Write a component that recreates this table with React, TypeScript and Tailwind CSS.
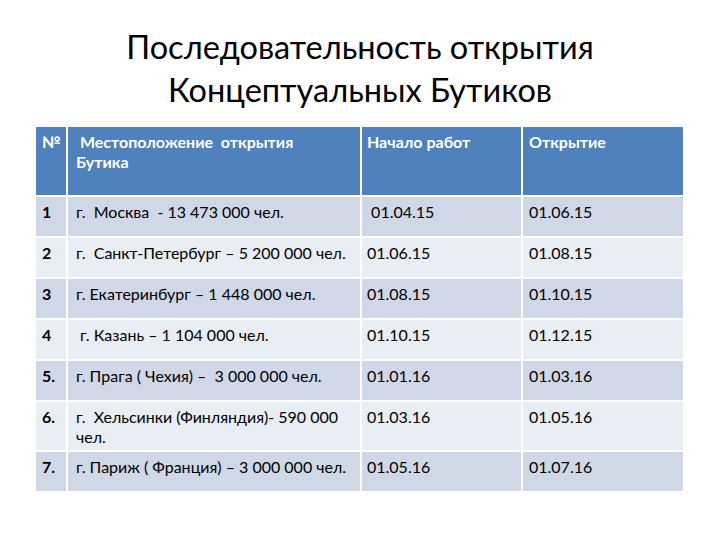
import React from "react";

const rows: { n: string; loc: string; start: string; open: string; h: string; dark: boolean }[] = [
  { n: "1", loc: "г.  Москва  - 13 473 000 чел.", start: " 01.04.15", open: "01.06.15", h: "h-[39px]", dark: true },
  { n: "2", loc: "г.  Санкт-Петербург – 5 200 000 чел.", start: "01.06.15", open: "01.08.15", h: "h-[39px]", dark: false },
  { n: "3", loc: "г. Екатеринбург – 1 448 000 чел.", start: "01.08.15", open: "01.10.15", h: "h-[39px]", dark: true },
  { n: "4", loc: " г. Казань – 1 104 000 чел.", start: "01.10.15", open: "01.12.15", h: "h-[39px]", dark: false },
  { n: "5.", loc: "г. Прага ( Чехия) –  3 000 000 чел.", start: "01.01.16", open: "01.03.16", h: "h-[39px]", dark: true },
  { n: "6.", loc: "г.  Хельсинки (Финляндия)- 590 000 чел.", start: "01.03.16", open: "01.05.16", h: "h-[48px]", dark: false },
  { n: "7.", loc: "г. Париж ( Франция) – 3 000 000 чел.", start: "01.05.16", open: "01.07.16", h: "h-[39px]", dark: true },
];

export default function App() {
  return (
    <div
      className="w-[720px] h-[540px] bg-white text-black overflow-hidden"
      style={{ fontFamily: "Lato, 'Open Sans', 'Liberation Sans', sans-serif" }}
    >
      <div className="pt-[25px] h-[127px] flex flex-col items-center text-[32.5px] leading-[43px] text-black">
        <div>Последовательность открытия</div>
        <div>Концептуальных Бутиков</div>
      </div>
      <div className="ml-[36px] w-[647px] flex flex-col gap-[2px] text-[16px] leading-[20px]">
        <div className="grid grid-cols-[30px_292px_159px_160px] gap-[2px] h-[68px] text-white font-bold">
          <div className="bg-[#4f81bd] pt-[5px] pl-[6px]">№</div>
          <div className="bg-[#4f81bd] pt-[5px] pl-[8px] pr-[40px] whitespace-pre-wrap">{" Местоположение  открытия\nБутика"}</div>
          <div className="bg-[#4f81bd] pt-[5px] pl-[5px]">Начало работ</div>
          <div className="bg-[#4f81bd] pt-[5px] pl-[6px]">Открытие</div>
        </div>
        {rows.map((r) => {
          const bg = r.dark ? "bg-[#d0d8e8]" : "bg-[#e9edf4]";
          return (
            <div key={r.n} className={`grid grid-cols-[30px_292px_159px_160px] gap-[2px] ${r.h}`}>
              <div className={`${bg} pt-[5px] pl-[6px] font-bold`}>{r.n}</div>
              <div className={`${bg} pt-[5px] pl-[8px] pr-[6px] whitespace-pre-wrap`}>{r.loc}</div>
              <div className={`${bg} pt-[5px] pl-[5px] whitespace-pre`}>{r.start}</div>
              <div className={`${bg} pt-[5px] pl-[6px]`}>{r.open}</div>
            </div>
          );
        })}
      </div>
    </div>
  );
}
